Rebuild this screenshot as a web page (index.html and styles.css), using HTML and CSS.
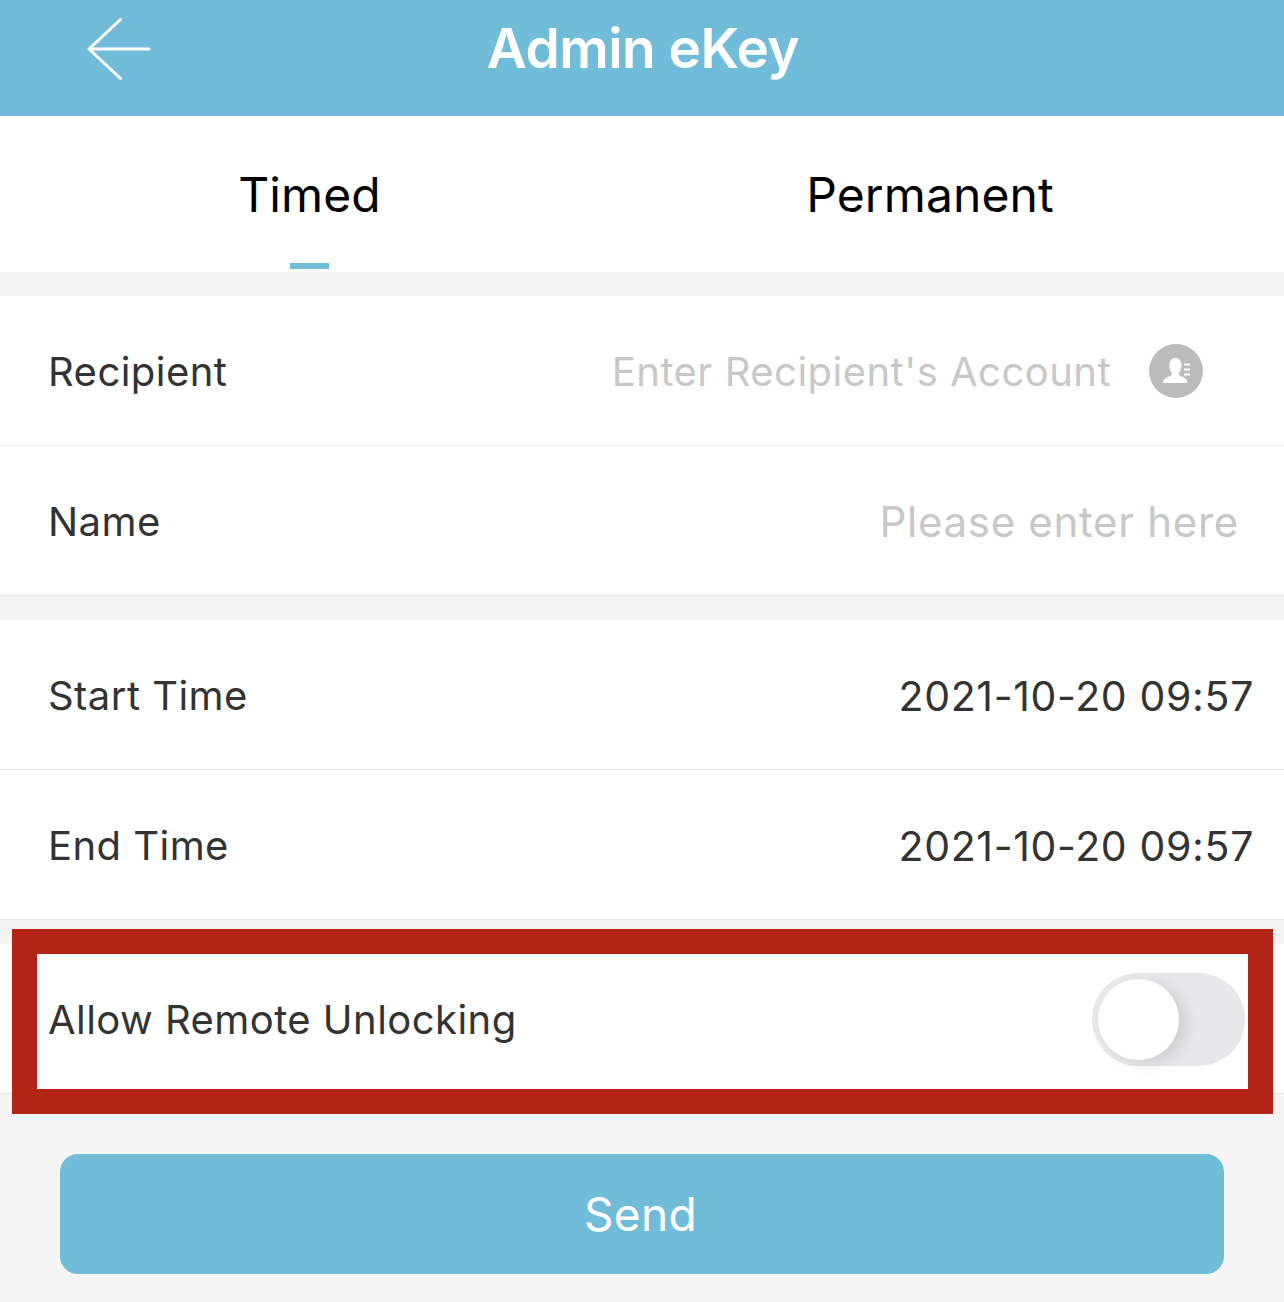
FILE: index.html
```html
<!DOCTYPE html>
<html lang="en">
<head>
<meta charset="utf-8">
<title>Admin eKey</title>
<link rel="stylesheet" href="styles.css">
</head>
<body>
<div class="page">
  <header class="topbar">
    <svg class="back" width="66" height="64" viewBox="0 0 66 64" aria-hidden="true">
      <path d="M34.500 2.500 L3 32 L34.500 61.500 M3 32 H63" fill="none" stroke="#fff" stroke-width="3" stroke-linecap="round" stroke-linejoin="round"/>
    </svg>
    <h1 class="title">Admin eKey</h1>
  </header>
  <nav class="tabs">
    <div class="tab tab-active">Timed<span class="tab-mark"></span></div>
    <div class="tab">Permanent</div>
  </nav>
  <section class="group">
    <div class="row">
      <span class="label">Recipient</span>
      <span class="placeholder">Enter Recipient's Account</span>
      <svg class="contact" width="54" height="54" viewBox="0 0 54 54" aria-hidden="true">
        <circle cx="27" cy="27" r="27" fill="#bcbcbc"/>
        <path d="M14 39 C14 34.500 18 33.500 21.500 32 C23 31.300 23.200 29.800 22.800 28.800 C21 27 20.300 24.500 20.300 21.500 C20.300 16.500 23 14 26.300 14 C29.800 14 32.500 16.500 32.500 21.500 C32.500 24.500 31.700 27 30 28.800 C29.600 29.800 29.800 31.300 31.300 32 C34.800 33.500 38.500 34.500 38.500 39 Z" fill="#fff"/>
        <path d="M35 20.500 H41 M35 25.500 H41 M35 30.500 H41" stroke="#fff" stroke-width="2"/>
      </svg>
    </div>
    <div class="row">
      <span class="label">Name</span>
      <span class="placeholder placeholder-end">Please enter here</span>
    </div>
  </section>
  <section class="group">
    <div class="row">
      <span class="label">Start Time</span>
      <span class="value">2021-10-20 09:57</span>
    </div>
    <div class="row">
      <span class="label">End Time</span>
      <span class="value">2021-10-20 09:57</span>
    </div>
  </section>
  <section class="group">
    <div class="row row-switch">
      <span class="label">Allow Remote Unlocking</span>
      <div class="switch"><span class="knob"></span></div>
    </div>
  </section>
  <div class="actions">
    <button class="send" type="button">Send</button>
  </div>
  <div class="highlight"></div>
</div>
</body>
</html>
```
FILE: styles.css
```css
* { box-sizing: border-box; }
html, body { margin: 0; padding: 0; }
body {
  background: #f5f5f5;
  font-family: Inter, "Liberation Sans", sans-serif;
  color: #333;
}
.page { position: relative; width: 1284px; height: 1302px; overflow: hidden; }
.topbar {
  height: 116px;
  padding-bottom: 20px;
  background: #71bdd9;
  display: flex;
  align-items: center;
  justify-content: center;
  position: relative;
}
.back { position: absolute; left: 86px; top: 17px; }
.title {
  margin: 0 0 0 2px;
  font-size: 55px;
  font-weight: 600;
  letter-spacing: -0.55px;
  color: #fff;
}
.tabs { height: 156px; background: #fff; display: flex; margin-bottom: 24px; }
.tab {
  position: relative;
  display: flex;
  align-items: center;
  justify-content: center;
  font-size: 48px;
  color: #000;
  letter-spacing: 0.1px;
}
.tab-active { flex: 0 0 619px; }
.tab:not(.tab-active) { flex: 0 0 622px; }
.tab-mark {
  position: absolute;
  bottom: 3px;
  left: 290px;
  width: 39px;
  height: 6px;
  background: #71bdd9;
}
.group { background: #fff; margin-bottom: 24px; border-bottom: 1px solid #e6e6e6; }
.row {
  height: 150px;
  padding: 2px 30px 0 48px;
  display: flex;
  align-items: center;
  justify-content: space-between;
  border-bottom: 1px solid #e8e8e8;
  font-size: 40px;
}
.row:last-child { height: 149px; border-bottom: 0; }
.label { color: #333; letter-spacing: 0.45px; }
.placeholder { color: #c8c8c8; margin-left: auto; letter-spacing: 0.48px; }
.placeholder-end { margin-right: 15px; font-size: 42px; letter-spacing: 0.7px; }
.contact { margin: -2px 51px 0 38px; flex: none; }
.value { color: #333; font-size: 41px; letter-spacing: 0.65px; }
.row-switch { padding-right: 39px; }
.switch {
  position: relative;
  width: 153px;
  height: 93px;
  border-radius: 47px;
  background: #e8e8ea;
}
.knob {
  position: absolute;
  left: 6px;
  top: 6px;
  width: 81px;
  height: 81px;
  border-radius: 50%;
  background: #fff;
  box-shadow: 8px 4px 14px rgba(0, 0, 0, 0.1);
}
.actions { padding: 36px 60px 0; }
.send {
  display: block;
  width: 1164px;
  height: 120px;
  padding: 0 3px 0 0;
  border: 0;
  border-radius: 18px;
  background: #71bdd9;
  color: #fff;
  font: inherit;
  font-size: 46px;
  letter-spacing: 0.3px;
}
.highlight {
  position: absolute;
  left: 12px;
  top: 929px;
  width: 1261px;
  height: 185px;
  border: 25px solid #b22416;
}
```
